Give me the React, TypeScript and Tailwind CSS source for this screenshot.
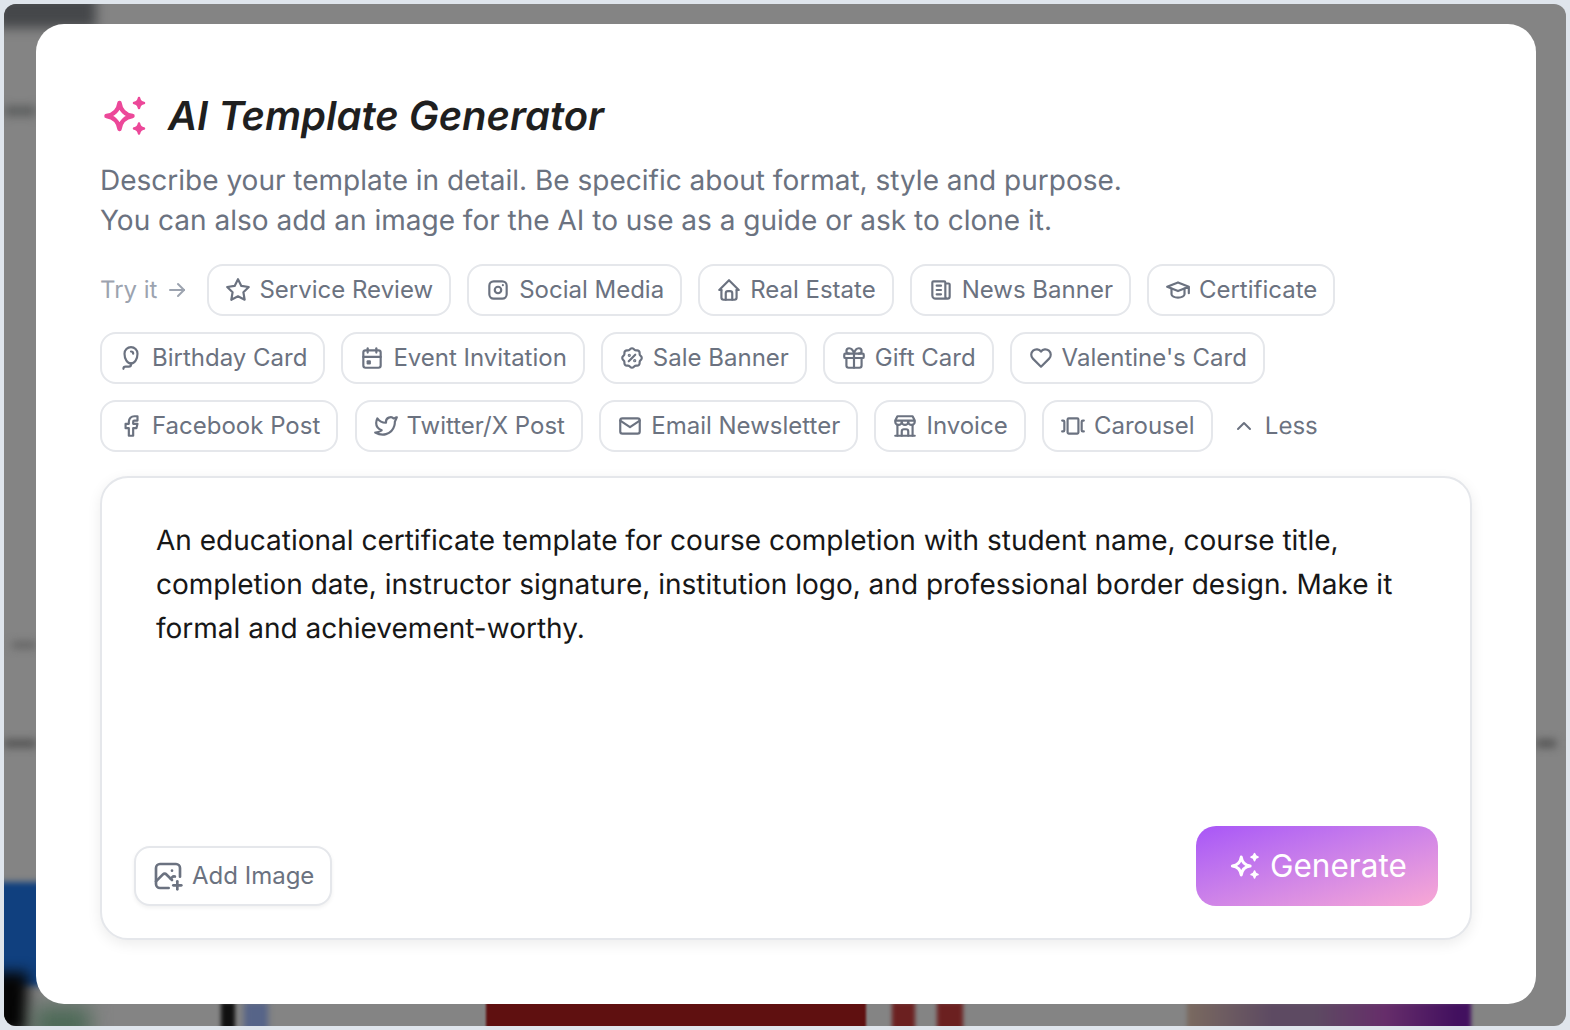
import {
  TbStar,
  TbBrandInstagram,
  TbHome,
  TbNews,
  TbSchool,
  TbBalloon,
  TbCalendarEvent,
  TbRosetteDiscount,
  TbGift,
  TbHeart,
  TbBrandFacebook,
  TbBrandTwitter,
  TbMail,
  TbBuildingStore,
  TbCarouselHorizontal,
  TbPhotoPlus,
  TbChevronUp,
  TbArrowRight,
} from "react-icons/tb"
import type { IconType } from "react-icons"

const row1: [IconType, string][] = [
  [TbStar, "Service Review"],
  [TbBrandInstagram, "Social Media"],
  [TbHome, "Real Estate"],
  [TbNews, "News Banner"],
  [TbSchool, "Certificate"],
]
const row2: [IconType, string][] = [
  [TbBalloon, "Birthday Card"],
  [TbCalendarEvent, "Event Invitation"],
  [TbRosetteDiscount, "Sale Banner"],
  [TbGift, "Gift Card"],
  [TbHeart, "Valentine's Card"],
]
const row3: [IconType, string][] = [
  [TbBrandFacebook, "Facebook Post"],
  [TbBrandTwitter, "Twitter/X Post"],
  [TbMail, "Email Newsletter"],
  [TbBuildingStore, "Invoice"],
  [TbCarouselHorizontal, "Carousel"],
]

function Sparkles({ className }: { className?: string }) {
  return (
    <svg viewBox="0 0 44 44" fill="none" className={className}>
      <path
        d="M16.500 9C17.500 16 22.500 21 29.500 22C22.500 23 17.500 28 16.500 35C15.500 28 10.500 23 3.500 22C10.500 21 15.500 16 16.500 9Z"
        stroke="currentColor"
        strokeWidth="4.500"
        strokeLinejoin="round"
      />
      <path
        d="M36 4C36.500 7 38 8.500 41 9C38 9.500 36.500 11 36 14C35.500 11 34 9.500 31 9C34 8.500 35.500 7 36 4Z"
        fill="currentColor"
        stroke="currentColor"
        strokeWidth="2.500"
        strokeLinejoin="round"
      />
      <path
        d="M36 29.500C36.500 32.500 38 34 41 34.500C38 35 36.500 36.500 36 39.500C35.500 36.500 34 35 31 34.500C34 34 35.500 32.500 36 29.500Z"
        fill="currentColor"
        stroke="currentColor"
        strokeWidth="2.500"
        strokeLinejoin="round"
      />
    </svg>
  )
}

function Chip({ icon: Icon, label }: { icon: IconType; label: string }) {
  return (
    <button
      type="button"
      className="flex h-[52px] items-center gap-2 rounded-2xl border-2 border-[#e5e7eb] bg-white px-4 text-[24px] leading-none text-[#6b7280]"
    >
      <Icon className="h-[26px] w-[26px] shrink-0" />
      {label}
    </button>
  )
}

export default function App() {
  return (
    <div className="relative h-[1030px] w-[1570px] overflow-hidden bg-[#dfe5ec] p-1 font-['Inter',sans-serif] [text-rendering:geometricPrecision]">
      <div className="relative h-full w-full overflow-hidden rounded-xl bg-[#848484] pl-8 pt-5">
        {/* blurred page behind the dialog */}
        <div className="absolute -left-2 -top-2 h-[32px] w-[100px] bg-[#45474a] blur-[6px]" />
        <div className="absolute left-0 top-[102px] h-[10px] w-8 bg-[#5c5e5e] blur-[5px]" />
        <div className="absolute left-2 top-[638px] h-[6px] w-6 bg-[#5e5e5e] blur-[4px]" />
        <div className="absolute left-0 top-[736px] h-[7px] w-8 bg-[#4c4c4c] blur-[4px]" />
        <div className="absolute left-[1532px] top-[736px] h-[7px] w-[20px] bg-[#4c4c4c] blur-[4px]" />
        <div className="absolute -left-2 top-[878px] h-[104px] w-12 bg-[#10407f] blur-[3px]" />
        <div className="absolute -bottom-2 -left-3 h-[62px] w-[36px] bg-[#050505] blur-[7px]" />
        <div className="absolute -bottom-4 left-[30px] h-[36px] w-[56px] bg-[#4d6a57] blur-[10px]" />
        <div className="absolute -bottom-2 left-[217px] h-[32px] w-[14px] bg-[#101010] blur-[2px]" />
        <div className="absolute -bottom-2 left-[240px] h-[32px] w-[24px] bg-[#566488] blur-[3px]" />
        <div className="absolute -bottom-2 left-[482px] h-[32px] w-[380px] bg-[#5f1010] blur-[1px]" />
        <div className="absolute -bottom-2 left-[888px] h-[32px] w-[23px] bg-[#6b2020] blur-[2px]" />
        <div className="absolute -bottom-2 left-[933px] h-[32px] w-[26px] bg-[#6b2020] blur-[2px]" />
        <div className="absolute -bottom-2 left-[1183px] h-[32px] w-[284px] bg-[linear-gradient(90deg,#7a6a60,#5d4a62_30%,#5d4a62_45%,#662d6a_70%,#42105f_95%)] blur-[2px]" />

        <div className="relative flex h-[980px] w-[1500px] flex-col rounded-[28px] bg-white px-16 pb-16 pt-16">
          <div className="flex h-[56px] items-center">
            <Sparkles className="ml-[3px] h-[44px] w-[44px] text-[#ec4899]" />
            <h1 className="ml-[21px] text-[40px] font-semibold italic leading-none text-[#1f1f1f]">AI Template Generator</h1>
          </div>
          <p className="mt-4 text-[28px] leading-[40px] text-[#6b7280]">
            Describe your template in detail. Be specific about format, style and purpose.
            <br />
            You can also add an image for the AI to use as a guide or ask to clone it.
          </p>
          <div className="mt-6 flex flex-col gap-4">
            <div className="flex items-center gap-4">
              <span className="flex items-center gap-2 pr-[2px] text-[24px] leading-none text-[#9ca3af]">
                Try it <TbArrowRight className="h-6 w-6" />
              </span>
              {row1.map(([i, l]) => <Chip key={l} icon={i} label={l} />)}
            </div>
            <div className="flex items-center gap-4">
              {row2.map(([i, l]) => <Chip key={l} icon={i} label={l} />)}
            </div>
            <div className="flex items-center gap-[16.25px]">
              {row3.map(([i, l]) => <Chip key={l} icon={i} label={l} />)}
              <span className="ml-[3px] flex items-center gap-[9px] text-[24px] leading-none text-[#6b7280]">
                <TbChevronUp className="h-6 w-6" />
                Less
              </span>
            </div>
          </div>
          <div className="mt-6 flex min-h-0 flex-1 flex-col rounded-[28px] border-2 border-[#e5e7eb] bg-white px-8 pb-8 pt-10 shadow-[0_4px_14px_rgba(0,0,0,0.08)]">
            <p className="flex-1 px-[22px] text-[28px] leading-[44px] text-[#171717]">
              An educational certificate template for course completion with student name, course title, completion date, instructor signature, institution logo, and professional border design. Make it formal and achievement-worthy.
            </p>
            <div className="flex items-end justify-between">
              <button type="button" className="flex h-[60px] items-center gap-2 rounded-2xl border-2 border-[#e5e7eb] bg-white px-4 text-[24px] leading-none text-[#6b7280] shadow-[0_2px_4px_rgba(0,0,0,0.06)]">
                <TbPhotoPlus className="h-8 w-8" />
                Add Image
              </button>
              <button type="button" className="flex h-[80px] w-[242px] items-center gap-[10px] rounded-[20px] bg-gradient-to-br from-[#a855f7] to-[#f9a8d4] pl-[34px] text-[31.5px] text-white">
                <Sparkles className="h-[30px] w-[30px]" />
                Generate
              </button>
            </div>
          </div>
        </div>
      </div>
    </div>
  )
}
